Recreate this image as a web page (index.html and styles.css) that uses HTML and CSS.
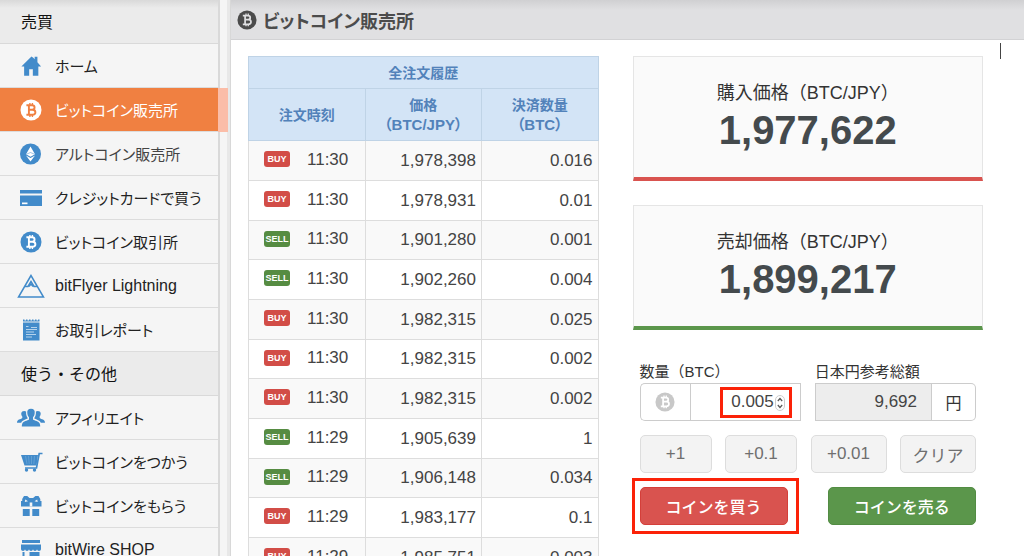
FILE: index.html
```html
<!DOCTYPE html>
<html lang="ja">
<head>
<meta charset="utf-8">
<meta name="viewport" content="width=device-width, initial-scale=1">
<title>ビットコイン販売所</title>
<link rel="stylesheet" href="styles.css">
</head>
<body>
<svg class="sprite" aria-hidden="true">
  <symbol id="coin" viewBox="0 0 22 22">
    <circle cx="11" cy="11" r="10.5" fill="currentColor"/>
    <g fill="none" stroke="var(--cut)" stroke-width="1.9">
      <path d="M6.400 6.300h5.600c3.400 0 3.400 4.400 0 4.400H9h3.400c4 0 4 5 0 5H6.400M8.900 6.300v9.400"/>
      <path stroke-width="1.400" d="M9.900 3.900v2.300M12.400 3.900v2.300M9.900 15.700V18M12.400 15.700V18"/>
    </g>
  </symbol>
</svg>
<div class="app">
  <nav class="sidebar">
    <h2 class="side-heading">売買</h2>
    <ul class="menu">
      <li><a href="#"><svg class="icon" viewBox="0 0 28 24"><path fill="currentColor" d="M14.500 1.500 3.500 12.500h3v10h5.500v-7h4v7h6v-10h3L21 8V2h-3v2.500L16.500 3 14.500 1.500z"/></svg>ホーム</a></li>
      <li class="active"><a href="#"><svg class="icon coin" viewBox="0 0 28 22"><use href="#coin" x="3" width="22" height="22"/></svg>ビットコイン販売所</a></li>
      <li class="muted"><a href="#"><svg class="icon" viewBox="0 0 28 22"><circle cx="13.500" cy="11" r="10.500" fill="currentColor"/><path fill="#fff" d="M13.500 3.500 9 11.200l4.500 2.600 4.500-2.600zM9 12.500l4.500 6 4.500-6-4.500 2.600z"/><path stroke="#428bca" stroke-width=".5" fill="none" d="m9.500 11.200 4-1.700 4 1.700"/></svg>アルトコイン販売所</a></li>
      <li><a href="#"><svg class="icon" viewBox="0 0 28 22"><path fill="currentColor" d="M3 3h22v3.500H3zM3 8.500h22V19H3z"/><path fill="#fff" d="M5 15.500h5.500v1.700H5z"/></svg>クレジットカードで買う</a></li>
      <li><a href="#"><svg class="icon coin" viewBox="0 0 28 22"><use href="#coin" x="3" width="22" height="22"/></svg>ビットコイン取引所</a></li>
      <li><a href="#"><svg class="icon tall" viewBox="0 0 28 24"><g fill="none" stroke="currentColor" stroke-width="1.500"><path d="M14 1.500 1.500 23h25zM7.800 12.500h3.200l3-5 3 5h3.200"/><path d="m12 12.500 2-2.500 2 2.500"/></g></svg><span class="latin">bitFlyer Lightning</span></a></li>
      <li><a href="#"><svg class="icon" viewBox="0 0 28 22"><path fill="currentColor" d="M6 3.500h16.500V21.500H6zM6 .5h1.500v1h1.500v-1h1.500v1H12v-1h1.500v1H15v-1h1.500v1H18v-1h1.500v1H21v-1h1.500v2H6z"/><path stroke="#b5d3ec" stroke-width="1" d="M9 7.500h2.500M14 8.500h6M9 10.500h11M9 13h8M9 15.500h10M9 18h6"/></svg>お取引レポート</a></li>
    </ul>
    <h2 class="side-heading">使う・その他</h2>
    <ul class="menu">
      <li><a href="#"><svg class="icon" viewBox="0 0 28 20"><path fill="currentColor" d="M14 .8c3 0 4 1.800 3.700 4.400-.2 2-.8 3-1.700 4v2.200c1.600 1.300 5.700 1.600 6.700 4 .4 1 .5 2 .5 3.100H4.800c0-1.100.1-2.100.5-3.100 1-2.400 5.100-2.700 6.700-4V9.200c-.9-1-1.500-2-1.700-4C10 2.600 11 .8 14 .8zM7.200 3c.8 0 1.400.2 1.900.6-.2 2.700.3 4.800 1.700 6.700-1.600 1.300-5.500 1.700-6.600 4.500H0c0-3.600 3.500-3.300 5.300-4.800V8.500C3.600 6.400 3.800 3 7.200 3zM20.800 3c-.8 0-1.400.2-1.900.6.2 2.700-.3 4.800-1.700 6.700 1.600 1.300 5.500 1.700 6.600 4.500H28c0-3.600-3.500-3.300-5.300-4.800V8.500C24.400 6.400 24.200 3 20.800 3z"/></svg>アフィリエイト</a></li>
      <li><a href="#"><svg class="icon" viewBox="0 0 28 22"><path fill="currentColor" d="M4 4h17l-1.500 10.500H7.500z"/><path fill="none" stroke="currentColor" stroke-width="1.700" d="M25.500 2.500h-3.300L19.500 17H8"/><circle cx="9.500" cy="19" r="1.700" fill="currentColor"/><circle cx="17.500" cy="19" r="1.700" fill="currentColor"/><path stroke="#7fb1dd" stroke-width=".5" d="M8.500 5l1.500 8M11.500 5l.7 8M14.500 5v8M17.500 5l-.7 8"/></svg>ビットコインをつかう</a></li>
      <li><a href="#"><svg class="icon" viewBox="0 0 28 22"><path fill="currentColor" d="M7 1h3.200l2.300 2h3.600l2.300-2h3.100l1.800 3v2h1.200v5.500H4V6h1.200V4zM5.800 14h6.900v7H5.800zM15.300 14h6.900v7h-6.900z"/><path fill="#f5f5f5" d="M8.300 4.500 11 6.200 7.800 7zM20.200 4.500 17.500 6.200l3.200.8zM12.700 7.500h2.600v4h-2.600z"/></svg>ビットコインをもらう</a></li>
      <li><a href="#"><svg class="icon" viewBox="0 0 28 22"><path fill="currentColor" d="M5 1h18v3H5zM4 5.500h20V10c0 2.500-4 2.500-4 0 0 2.500-4 2.500-4 0 0 2.500-4 2.500-4 0 0 2.500-4 2.500-4 0 0 2.500-4 2.500-4 0zM5.500 13h2v6h5v-6h10v8h-17z"/></svg><span class="latin">bitWire SHOP</span></a></li>
    </ul>
  </nav>
  <main class="main">
    <header class="page-header">
      <h1><svg class="title-icon" viewBox="0 0 22 22"><use href="#coin"/></svg>ビットコイン販売所</h1>
    </header>
    <div class="content">
      <table class="orders">
        <thead>
          <tr class="caption"><th colspan="3">全注文履歴</th></tr>
          <tr class="columns"><th>注文時刻</th><th>価格<br><span class="unit">（BTC/JPY）</span></th><th>決済数量<br><span class="unit">（BTC）</span></th></tr>
        </thead>
        <tbody>
          <tr><td><span class="badge buy">BUY</span><time>11:30</time></td><td>1,978,398</td><td>0.016</td></tr>
          <tr><td><span class="badge buy">BUY</span><time>11:30</time></td><td>1,978,931</td><td>0.01</td></tr>
          <tr><td><span class="badge sell">SELL</span><time>11:30</time></td><td>1,901,280</td><td>0.001</td></tr>
          <tr><td><span class="badge sell">SELL</span><time>11:30</time></td><td>1,902,260</td><td>0.004</td></tr>
          <tr><td><span class="badge buy">BUY</span><time>11:30</time></td><td>1,982,315</td><td>0.025</td></tr>
          <tr><td><span class="badge buy">BUY</span><time>11:30</time></td><td>1,982,315</td><td>0.002</td></tr>
          <tr><td><span class="badge buy">BUY</span><time>11:30</time></td><td>1,982,315</td><td>0.002</td></tr>
          <tr><td><span class="badge sell">SELL</span><time>11:29</time></td><td>1,905,639</td><td>1</td></tr>
          <tr><td><span class="badge sell">SELL</span><time>11:29</time></td><td>1,906,148</td><td>0.034</td></tr>
          <tr><td><span class="badge buy">BUY</span><time>11:29</time></td><td>1,983,177</td><td>0.1</td></tr>
          <tr><td><span class="badge buy">BUY</span><time>11:29</time></td><td>1,985,751</td><td>0.003</td></tr>
        </tbody>
      </table>
      <section class="trade">
        <div class="price ask"><div class="price-label">購入価格（BTC/JPY）</div><div class="price-value">1,977,622</div></div>
        <div class="price bid"><div class="price-label">売却価格（BTC/JPY）</div><div class="price-value">1,899,217</div></div>
        <form class="order-form">
          <div class="fields">
            <div class="field">
              <label for="amount">数量（BTC）</label>
              <div class="group">
                <span class="addon coin-addon"><svg class="addon-icon" viewBox="0 0 22 22"><use href="#coin"/></svg></span>
                <input id="amount" class="amount" type="number" step="0.001" value="0.005">
                <span class="highlight amount-mark"><svg class="stepper" viewBox="0 0 10 16"><rect x=".5" y=".5" width="9" height="15" rx="4.500" fill="#fff" stroke="#ccc"/><path d="m2.800 6 2.200-2.500L7.200 6M2.800 10 5 12.500 7.200 10" fill="none" stroke="#555" stroke-width="1.200"/></svg></span>
              </div>
            </div>
            <div class="field">
              <label for="total">日本円参考総額</label>
              <div class="group">
                <input id="total" class="total" type="text" value="9,692" readonly>
                <span class="addon yen">円</span>
              </div>
            </div>
          </div>
          <div class="steps">
            <button type="button">+1</button>
            <button type="button">+0.1</button>
            <button type="button">+0.01</button>
            <button type="button">クリア</button>
          </div>
          <div class="actions">
            <div class="action"><button type="button" class="do-buy">コインを買う</button><span class="highlight buy-mark"></span></div>
            <div class="action"><button type="button" class="do-sell">コインを売る</button></div>
          </div>
        </form>
      </section>
    </div>
    <span class="caret"></span>
  </main>
</div>
</body>
</html>
```
FILE: styles.css
```css
* {
  box-sizing: border-box;
}

body {
  margin: 0;
  background: #fff;
  color: #333;
  font-family: "Liberation Sans", "Noto Sans CJK JP", sans-serif;
  font-size: 16px;
}

h1, h2, ul {
  margin: 0;
  padding: 0;
}

button, input {
  font: inherit;
}

.sprite {
  position: absolute;
  width: 0;
  height: 0;
}

.app {
  display: flex;
  height: 100vh;
  overflow: hidden;
}

/* Sidebar */
.sidebar {
  flex: none;
  width: 231px;
  padding-right: 11px;
  background: linear-gradient(to left, #d8d8d8 1px, #e8e8e8 1px, #e8e8e8 4px, #f5f5f5 4px);
}

.side-heading {
  height: 44px;
  padding-left: 21px;
  border-right: 2px solid #d9d9d9;
  border-bottom: 1px solid #d9d9d9;
  background: #ebebeb;
  color: #111;
  font-size: 16px;
  font-weight: 400;
  line-height: 46px;
}

.side-heading:first-child {
  background: linear-gradient(#d9d9d9, #ebebeb 8px);
}

.menu {
  border-right: 2px solid #d9d9d9;
  list-style: none;
}

.menu li {
  position: relative;
  height: 44px;
  border-bottom: 1px solid #dcdcdc;
}

.menu a {
  display: flex;
  align-items: center;
  gap: 10px;
  height: 43px;
  padding-left: 17px;
  color: #222;
  font-size: 15px;
  font-feature-settings: "palt";
  text-decoration: none;
  white-space: nowrap;
}

.menu .latin {
  font-size: 16px;
}

.menu .muted a {
  color: #444;
}

.menu .active a {
  background: #f08041;
  color: #fff;
}

.menu .active::after {
  content: "";
  position: absolute;
  top: 0;
  left: 100%;
  width: 10px;
  height: 44px;
  background: #fbbda8;
}

.icon {
  flex: none;
  width: 28px;
  height: 22px;
  color: #428bca;
  --cut: #fff;
}

.icon.tall {
  height: 24px;
}

.active .icon {
  color: #fff;
  --cut: #f08041;
}

/* Main pane */
.main {
  position: relative;
  flex: 1;
  min-width: 0;
}

.page-header {
  height: 40px;
  padding-left: 6px;
  border-bottom: 1px solid #d2d2d4;
  background: linear-gradient(#d0d0d2, #e0e0e2 10px);
}

.page-header h1 {
  display: flex;
  align-items: center;
  gap: 6px;
  height: 40px;
  color: #4c4c4c;
  font-size: 18px;
  font-feature-settings: "palt";
}

.title-icon {
  width: 20px;
  height: 20px;
  --cut: #e0e0e2;
}

.content {
  display: grid;
  grid-template-columns: minmax(0, 1fr) minmax(0, 1fr);
  align-items: start;
  gap: 34px;
  padding: 16px 41px 0 17px;
}

.caret {
  position: absolute;
  top: 43px;
  right: 23px;
  width: 1px;
  height: 16px;
  background: #444;
}

/* Order history */
.orders {
  width: 100%;
  border-collapse: collapse;
  table-layout: fixed;
}

.orders th {
  padding: 0;
  border: 1px solid #bfd3e6;
  background: #d3e4f6;
  color: #5282ba;
  font-size: 14px;
  line-height: 20px;
  font-feature-settings: "palt";
}

.orders .unit {
  font-size: 15px;
}

.caption {
  height: 32px;
}

.columns {
  height: 52px;
}

.orders td {
  padding: 0 5px;
  border: 1px solid #ddd;
  color: #444;
  font-size: 17px;
  line-height: 20px;
  text-align: right;
}

.orders tbody tr {
  height: 40px;
}

.orders tbody tr:nth-child(3n) {
  height: 39px;
}

.orders tbody tr:nth-child(odd) {
  background: #f9f9f9;
}

.orders td:first-child {
  padding: 0 0 3px 15px;
  text-align: left;
}

.badge {
  display: inline-block;
  width: 26px;
  height: 16px;
  margin-right: 17px;
  border-radius: 3px;
  color: #fff;
  font-size: 9px;
  font-weight: 700;
  line-height: 16px;
  text-align: center;
  vertical-align: middle;
}

.orders time {
  vertical-align: middle;
}

.badge.buy {
  background: #d24d47;
}

.badge.sell {
  background: #568c42;
}

/* Prices */
.price {
  height: 125px;
  margin-bottom: 24px;
  padding-top: 22px;
  border: 1px solid #e5e5e5;
  background: #fafafa;
  text-align: center;
}

.price.ask {
  border-bottom: 4px solid #d9534f;
}

.price.bid {
  border-bottom: 4px solid #5b964b;
}

.price-label {
  font-size: 18px;
  line-height: 28px;
}

.price-value {
  color: #444a4d;
  font-size: 40px;
  font-weight: 700;
  line-height: 46px;
}

/* Order form */
.order-form {
  padding: 7px 7px 0;
}

.fields {
  display: grid;
  grid-template-columns: minmax(0, 1fr) minmax(0, 1fr);
  gap: 14px;
}

.field label {
  display: block;
  font-size: 15px;
  line-height: 22px;
}

.group {
  position: relative;
  display: flex;
  height: 38px;
}

.group input {
  flex: 1;
  min-width: 0;
  margin: 0;
  border: 1px solid #ccc;
  border-radius: 0;
  background: #fff;
  color: #444;
  font-size: 17px;
  text-align: right;
}

.group .amount {
  padding: 0 26px 0 0;
  appearance: textfield;
}

.amount::-webkit-inner-spin-button {
  display: none;
}

.group .total {
  padding: 0 14px 0 0;
  background: #ededed;
}

.addon {
  display: flex;
  align-items: center;
  justify-content: center;
  border: 1px solid #ccc;
  background: #fff;
}

.coin-addon {
  width: 50px;
  border-right: 0;
  border-radius: 5px 0 0 5px;
}

.yen {
  width: 44px;
  border-left: 0;
  border-radius: 0 5px 5px 0;
}

.addon-icon {
  width: 20px;
  height: 20px;
  color: #c8c8c8;
  --cut: #fff;
}

.highlight {
  position: absolute;
  border: 3px solid #fb2208;
  pointer-events: none;
}

.amount-mark {
  top: 4px;
  right: 9px;
  display: flex;
  align-items: center;
  justify-content: flex-end;
  width: 72px;
  height: 31px;
  padding-right: 4px;
}

.stepper {
  width: 10px;
  height: 16px;
}

.steps {
  display: flex;
  justify-content: space-between;
  margin-top: 14px;
}

.steps button {
  height: 38px;
  padding: 0;
  border: 1px solid #ddd;
  border-radius: 5px;
  background: #f3f3f3;
  color: #6f6f6f;
  font-size: 17px;
  flex: 0 1 76px;
}

.steps button:nth-child(-n+2) {
  flex-basis: 72px;
}

.actions {
  display: grid;
  grid-template-columns: 1fr 1fr;
  gap: 40px;
  margin-top: 14px;
}

.action {
  position: relative;
}

.action button {
  width: 100%;
  height: 38px;
  padding: 0;
  border: 1px solid #d43f3a;
  border-radius: 5px;
  background: #d9534f;
  color: #fff;
  font-size: 16px;
  font-weight: 500;
}

.action .do-sell {
  border-color: #528c43;
  background: #5b964b;
}

.buy-mark {
  top: -9px;
  right: -11px;
  bottom: -9px;
  left: -8px;
}
```
